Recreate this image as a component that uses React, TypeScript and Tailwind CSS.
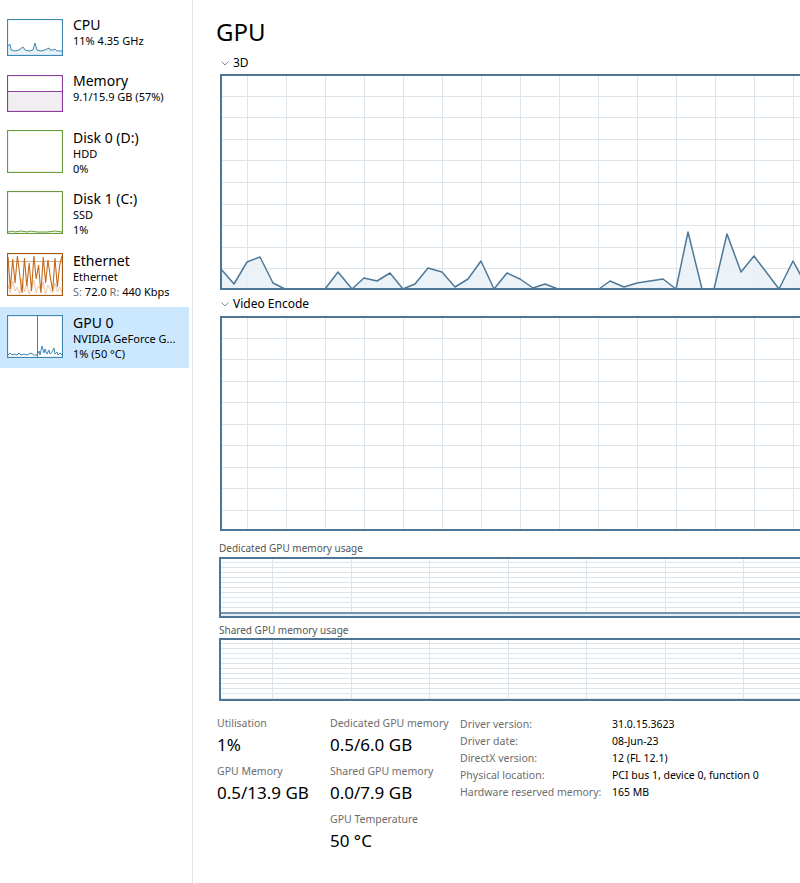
import React from 'react';

type Pt = [number, number];

const GRID = '#dde4ea';
const LINE = '#4f7896';
const FILL = '#e9f1f7';

interface GraphProps {
  w: number;
  h: number;
  colW: number;
  colOffset: number;
  rowH: number;
  pts?: Pt[];
  level?: number;
}

const Graph: React.FC<GraphProps> = ({ w, h, colW, colOffset, rowH, pts, level }) => {
  const vlines: number[] = [];
  for (let x = colOffset; x < w; x += colW) vlines.push(Math.round(x) + 0.5);
  const hlines: number[] = [];
  for (let y = rowH; y < h - 2; y += rowH) hlines.push(Math.round(y) + 0.5);

  const poly = pts ? pts.map(p => p.join(',')).join(' ') : '';
  const area = pts ? `${pts[0][0]},${h} ${poly} ${pts[pts.length - 1][0]},${h}` : '';

  return (
    <svg width={w} height={h} className="block">
      <rect width={w} height={h} fill="#fff" />
      {vlines.map(x => (
        <line key={'v' + x} x1={x} x2={x} y1={0} y2={h} stroke={GRID} strokeWidth={1} />
      ))}
      {hlines.map(y => (
        <line key={'h' + y} x1={0} x2={w} y1={y} y2={y} stroke={GRID} strokeWidth={1} />
      ))}
      {pts && (
        <>
          <polygon points={area} fill={FILL} opacity={0.85} />
          <polyline points={poly} fill="none" stroke={LINE} strokeWidth={1.5} strokeLinejoin="round" />
        </>
      )}
      {level !== undefined && (
        <>
          <rect x={0} y={h - level} width={w} height={level} fill="#e2eef6" />
          <line x1={0} x2={w} y1={h - level} y2={h - level} stroke={LINE} strokeWidth={1.5} />
        </>
      )}
      <rect x={1} y={1} width={w - 2} height={h - 2} fill="none" stroke="#4e7593" strokeWidth={2} />
    </svg>
  );
};

const pts3d: Pt[] = [
  [1, 195], [14, 210], [27, 188], [40, 183], [53, 209], [65, 215], [105, 215], [118, 198],
  [132, 215], [144, 204], [157, 207], [170, 199], [183, 215], [195, 210], [208, 194], [222, 198],
  [235, 213], [248, 205], [261, 187], [274, 215], [287, 199], [300, 205], [313, 214], [325, 210],
  [338, 215], [379, 215], [390, 207], [404, 213], [417, 209], [430, 207], [443, 205], [456, 215],
  [468, 158], [482, 215], [494, 215], [507, 160], [521, 198], [534, 182], [559, 215], [573, 187],
  [586, 211], [599, 200],
];

// small thumbnails in the sidebar
const Thumb: React.FC<{ h: number; border: string; children?: React.ReactNode }> = ({ h, border, children }) => (
  <svg width={56} height={h} className="block shrink-0">
    <rect width={56} height={h} fill="#fff" />
    {children}
    <rect x={0.5} y={0.5} width={55} height={h - 1} fill="none" stroke={border} strokeWidth={1.2} />
  </svg>
);

const cpuLine = '1,27 3,25 4,31 8,32 12,31 16,28 18,31 22,32 26,31 28,24 30,31 34,32 38,31 42,29 43,31 46,31 48,30 50,32 55,32';
const gpuLeft = '1,40 3,38 5,40 8,39 10,40 12,38 14,40 17,39 19,40 22,39 24,38 27,40 30,40';
const gpuRight = '30,40 32,36 33,40 35,31 37,38 38,34 40,39 42,35 43,39 45,37 47,33 48,39 50,37 51,40 53,38 55,40';

const ethA = (() => {
  const ys = [4, 36, 6, 30, 3, 22, 40, 5, 33, 10, 38, 3, 26, 12, 40, 4, 30, 7, 24, 38, 5, 34, 12, 3];
  return ys.map((y, i) => `${1 + i * 2.35},${y}`).join(' ');
})();
const ethB = (() => {
  const ys = [32, 40, 28, 38, 34, 41, 26, 39, 30, 41, 35, 27, 40, 33, 38, 29, 41, 32, 37, 40, 30, 39, 34, 40];
  return ys.map((y, i) => `${1 + i * 2.35},${y}`).join(' ');
})();

interface Item {
  title: string;
  lines: React.ReactNode[];
  thumb: React.ReactNode;
  h: string;
  pt: string;
  selected?: boolean;
}

const items: Item[] = [
  {
    title: 'CPU',
    lines: ['11%  4.35 GHz'],
    h: 'h-[56px]',
    pt: 'pt-[10px]',
    thumb: (
      <Thumb h={37} border="#3e86b4">
        <polygon points={`1,36 ${cpuLine} 55,36`} fill="#e6f1f8" />
        <polyline points={cpuLine} fill="none" stroke="#3e86b4" strokeWidth={1} />
      </Thumb>
    ),
  },
  {
    title: 'Memory',
    lines: ['9.1/15.9 GB (57%)'],
    h: 'h-[57px]',
    pt: 'pt-[10px]',
    thumb: (
      <Thumb h={37} border="#8b3c9c">
        <rect x={0} y={16} width={56} height={21} fill="#f0eef1" />
        <line x1={0} x2={56} y1={16.5} y2={16.5} stroke="#8b3c9c" strokeWidth={1} />
      </Thumb>
    ),
  },
  {
    title: 'Disk 0 (D:)',
    lines: ['HDD', '0%'],
    h: 'h-[61px]',
    pt: 'pt-[8px]',
    thumb: <Thumb h={43} border="#6b9c3b" />,
  },
  {
    title: 'Disk 1 (C:)',
    lines: ['SSD', '1%'],
    h: 'h-[62px]',
    pt: 'pt-[8px]',
    thumb: (
      <Thumb h={43} border="#6b9c3b">
        <polyline points="1,41 6,40 8,41 14,40 20,41 24,40 30,41 40,41 48,40 55,41" fill="none" stroke="#6b9c3b" strokeWidth={1} />
      </Thumb>
    ),
  },
  {
    title: 'Ethernet',
    lines: [
      'Ethernet',
      <span key="s">
        <span className="text-[#6d6d6d]">S: </span>72.0 <span className="text-[#6d6d6d]">R: </span>440 Kbps
      </span>,
    ],
    h: 'h-[62px]',
    pt: 'pt-[8px]',
    thumb: (
      <Thumb h={43} border="#a3560f">
        <line x1={0} x2={56} y1={8.5} y2={8.5} stroke="#c4956b" strokeWidth={0.8} />
        <polyline points={ethB} fill="none" stroke="#eab78a" strokeWidth={0.8} />
        <polyline points={ethA} fill="none" stroke="#c46a1c" strokeWidth={1.1} />
      </Thumb>
    ),
  },
  {
    title: 'GPU 0',
    lines: ['NVIDIA GeForce G...', '1% (50 °C)'],
    h: 'h-[61px]',
    pt: 'pt-[8px]',
    selected: true,
    thumb: (
      <Thumb h={43} border="#3e86b4">
        <line x1={30.5} x2={30.5} y1={0} y2={43} stroke="#3e86b4" strokeWidth={1} />
        <polyline points={gpuLeft} fill="none" stroke="#3e86b4" strokeWidth={1} />
        <polyline points={gpuRight} fill="none" stroke="#3e86b4" strokeWidth={1} />
      </Thumb>
    ),
  },
];

const Chevron = () => (
  <svg width={8} height={5} className="block">
    <polyline points="0.5,0.5 4,4 7.5,0.5" fill="none" stroke="#8a8a8a" strokeWidth={1} />
  </svg>
);

const Stat: React.FC<{ label: string; value: string }> = ({ label, value }) => (
  <div className="mb-[8px]">
    <div className="text-[10.5px] leading-[14px] text-[#6d6d6d]">{label}</div>
    <div className="text-[17px] leading-[22px] mt-[4px] text-black">{value}</div>
  </div>
);

const info: [string, string][] = [
  ['Driver version:', '31.0.15.3623'],
  ['Driver date:', '08-Jun-23'],
  ['DirectX version:', '12 (FL 12.1)'],
  ['Physical location:', 'PCI bus 1, device 0, function 0'],
  ['Hardware reserved memory:', '165 MB'],
];

export default function App() {
  return (
    <div className="w-[800px] h-[883px] overflow-hidden bg-white flex font-['Noto_Sans','Open_Sans',sans-serif] text-black">
      <aside className="w-[193px] shrink-0 border-r border-[#e3e3e3] pr-[3px] pt-[9px]">
        {items.map(it => (
          <div
            key={it.title}
            className={`flex pl-[7px] overflow-hidden ${it.h} ${it.pt} ${it.selected ? 'bg-[#cce8ff]' : ''}`}
          >
            {it.thumb}
            <div className={`ml-[10px] whitespace-nowrap ${it.lines.length > 1 ? '-mt-[1px]' : '-mt-[3px]'}`}>
              <div className="text-[14px] leading-[18px]">{it.title}</div>
              {it.lines.map((l, i) => (
                <div key={i} className="text-[11px] leading-[14.5px]">{l}</div>
              ))}
            </div>
          </div>
        ))}
      </aside>

      <main className="flex-1 min-w-0 pl-[23px] pt-[16px] overflow-hidden">
        <h1 className="text-[24px] leading-[32px] font-normal">GPU</h1>

        <div className="flex items-center gap-[4px] ml-[5px] mt-[7px] h-[16px]">
          <Chevron />
          <span className="text-[12px] leading-[16px]">3D</span>
        </div>
        <div className="ml-[4px] mt-[3px]">
          <Graph w={600} h={216} colW={39} colOffset={27} rowH={21.6} pts={pts3d} />
        </div>

        <div className="flex items-center gap-[4px] ml-[5px] mt-[6px] h-[16px]">
          <Chevron />
          <span className="text-[12px] leading-[16px]">Video Encode</span>
        </div>
        <div className="ml-[4px] mt-[4px]">
          <Graph w={600} h={215} colW={39} colOffset={27} rowH={21.5} />
        </div>

        <div className="ml-[3px] mt-[10px] text-[10px] leading-[14px] text-[#555]">Dedicated GPU memory usage</div>
        <div className="ml-[3px] mt-[2px]">
          <Graph w={600} h={61} colW={78.5} colOffset={53} rowH={5} level={5} />
        </div>

        <div className="ml-[3px] mt-[5px] text-[10px] leading-[14px] text-[#555]">Shared GPU memory usage</div>
        <div className="ml-[3px] mt-[1px]">
          <Graph w={600} h={63} colW={78.5} colOffset={53} rowH={5} level={1} />
        </div>

        <div className="flex ml-[1px] mt-[15px]">
          <div className="w-[113px]">
            <Stat label="Utilisation" value="1%" />
            <Stat label="GPU Memory" value="0.5/13.9 GB" />
          </div>
          <div className="w-[130px]">
            <Stat label="Dedicated GPU memory" value="0.5/6.0 GB" />
            <Stat label="Shared GPU memory" value="0.0/7.9 GB" />
            <Stat label="GPU Temperature" value="50 °C" />
          </div>
          <div>
            {info.map(([k, v]) => (
              <div key={k} className="flex text-[10.5px] leading-[17px]">
                <span className="w-[152px] text-[#6d6d6d]">{k}</span>
                <span className="text-black">{v}</span>
              </div>
            ))}
          </div>
        </div>
      </main>
    </div>
  );
}
